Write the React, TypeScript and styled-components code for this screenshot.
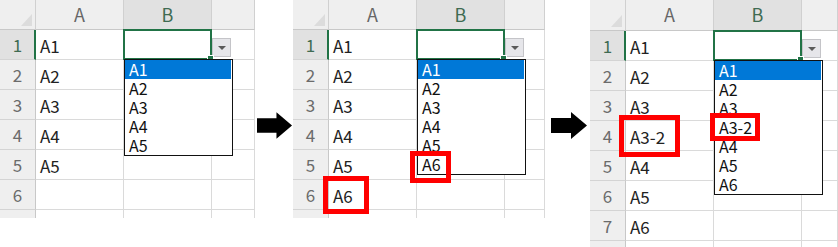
import React from 'react';
import styled, { createGlobalStyle } from 'styled-components';

const GREEN = '#217346';
const GRID = '#dadada';
const FONT = '"Noto Sans CJK JP", "Noto Sans", sans-serif';

const Global = createGlobalStyle`
  html, body { margin: 0; padding: 0; background: #ffffff; }
  body {
    width: 838px;
    height: 247px;
    overflow: hidden;
    font-family: ${FONT};
  }
`;

const Page = styled.div`
  display: flex;
  align-items: flex-start;
  width: 838px;
  height: 247px;
`;

const Sheet = styled.div<{ $cols: string; $rows: string }>`
  flex: none;
  display: grid;
  grid-template-columns: ${(p) => p.$cols};
  grid-template-rows: ${(p) => p.$rows};
`;

const Corner = styled.div`
  position: relative;
  background: #efefef;
  border-bottom: 1px solid #c8c8c8;
  border-right: 1px solid #d0d0d0;
  &::after {
    content: '';
    position: absolute;
    right: 3px;
    bottom: 3px;
    width: 11px;
    height: 12px;
    background: #dcdcdc;
    clip-path: polygon(100% 0, 100% 100%, 0 100%);
  }
`;

const ColHead = styled.div<{ $selected?: boolean }>`
  background: ${(p) => (p.$selected ? '#e1e1e1' : '#efefef')};
  border-right: 1px solid #d0d0d0;
  border-bottom: 1px solid #c8c8c8;
  color: ${(p) => (p.$selected ? '#3f6b52' : '#666666')};
  font-size: 18px;
  line-height: 29px;
  text-align: center;
`;

const RowHead = styled.div<{ $selected?: boolean }>`
  background: ${(p) => (p.$selected ? '#e1e1e1' : '#efefef')};
  border-bottom: 1px solid #d4d4d4;
  border-right: ${(p) => (p.$selected ? `2px solid ${GREEN}` : '1px solid #c8c8c8')};
  color: ${(p) => (p.$selected ? '#3f6b52' : '#6b6b6b')};
  font-size: 17px;
  line-height: 29px;
  text-align: center;
  padding-left: ${(p) => (p.$selected ? '1px' : '0')};
`;

const TailHead = styled.div`
  background: #efefef;
  border-right: 1px solid #c8c8c8;
`;

const Cell = styled.div`
  position: relative;
  border-right: 1px solid ${GRID};
  border-bottom: 1px solid ${GRID};
  color: #222222;
  font-size: 17px;
  line-height: 29px;
  padding: 1px 0 0 4px;
  white-space: nowrap;
`;

const TailCell = styled.div`
  border-right: 1px solid ${GRID};
`;

const ActiveCell = styled(Cell)`
  z-index: 3;
  &::before {
    content: '';
    position: absolute;
    left: -1px;
    top: -1px;
    right: -1px;
    bottom: -1px;
    border: 2px solid ${GREEN};
  }
  &::after {
    content: '';
    position: absolute;
    right: -3px;
    bottom: -3px;
    width: 5px;
    height: 5px;
    background: ${GREEN};
    border: 1px solid #fff;
    z-index: 2;
  }
`;

const DropButton = styled.div`
  position: absolute;
  left: calc(100% + 1px);
  top: 8px;
  width: 19px;
  height: 19px;
  background: #e6e6ea;
  border: 1px solid #c4c4c8;
  box-sizing: border-box;
  &::after {
    content: '';
    position: absolute;
    left: 5px;
    top: 7px;
    border-left: 4px solid transparent;
    border-right: 4px solid transparent;
    border-top: 4px solid #5a5a5a;
  }
`;

const List = styled.div`
  position: absolute;
  left: 0;
  top: 100%;
  width: 109px;
  box-sizing: border-box;
  background: #ffffff;
  border: 1px solid #111111;
  z-index: 4;
`;

const Item = styled.div<{ $active?: boolean }>`
  position: relative;
  height: 19px;
  line-height: 19px;
  font-size: 16px;
  padding-left: 4px;
  margin-right: 1px;
  color: ${(p) => (p.$active ? '#ffffff' : '#111111')};
  background: ${(p) => (p.$active ? '#0078d7' : 'transparent')};
  white-space: nowrap;
`;

const Mark = styled.span<{ $l: number; $t: number; $w: number; $h: number }>`
  position: absolute;
  left: ${(p) => p.$l}px;
  top: ${(p) => p.$t}px;
  width: ${(p) => p.$w}px;
  height: ${(p) => p.$h}px;
  box-sizing: border-box;
  border: 5px solid #ff0000;
  z-index: 5;
  pointer-events: none;
`;

const ArrowSlot = styled.div<{ $w: number; $pad: number }>`
  flex: none;
  width: ${(p) => p.$w}px;
  padding-left: ${(p) => p.$pad}px;
  box-sizing: border-box;
  margin-top: 112px;
  display: flex;
`;

type MarkBox = { row: number; l: number; t: number; w: number; h: number };

type SheetProps = {
  head: number;
  tail: number;
  lastCol: number;
  values: string[];
  items: string[];
  cellMark?: MarkBox;
  itemMark?: MarkBox;
};

const Arrow = () => (
  <svg width="37" height="27" viewBox="0 0 37 27">
    <polygon points="0,6 20,6 20,0 36,13.5 20,27 20,21 0,21" fill="#000" />
  </svg>
);

const Spreadsheet: React.FC<SheetProps> = ({ head, tail, lastCol, values, items, cellMark, itemMark }) => {
  const rows = `${head}px repeat(${values.length}, 30px) ${tail}px`;
  return (
    <Sheet $cols={`36px 88px 88px ${lastCol}px`} $rows={rows}>
      <Corner />
      <ColHead>A</ColHead>
      <ColHead $selected>B</ColHead>
      <ColHead />
      {values.map((v, i) => (
        <React.Fragment key={i}>
          <RowHead $selected={i === 0}>{i + 1}</RowHead>
          <Cell>
            {v}
            {cellMark && cellMark.row === i && (
              <Mark $l={cellMark.l} $t={cellMark.t} $w={cellMark.w} $h={cellMark.h} />
            )}
          </Cell>
          {i === 0 ? (
            <ActiveCell>
              <DropButton />
              <List>
                {items.map((it, j) => (
                  <Item key={j} $active={j === 0}>
                    {it}
                    {itemMark && itemMark.row === j && (
                      <Mark $l={itemMark.l} $t={itemMark.t} $w={itemMark.w} $h={itemMark.h} />
                    )}
                  </Item>
                ))}
              </List>
            </ActiveCell>
          ) : (
            <Cell />
          )}
          <Cell />
        </React.Fragment>
      ))}
      <TailHead />
      <TailCell />
      <TailCell />
      <TailCell />
    </Sheet>
  );
};

export default function App() {
  return (
    <>
      <Global />
      <Page>
        <Spreadsheet
          head={30}
          tail={8}
          lastCol={43}
          values={['A1', 'A2', 'A3', 'A4', 'A5', '']}
          items={['A1', 'A2', 'A3', 'A4', 'A5']}
        />
        <ArrowSlot $w={38} $pad={2}>
          <Arrow />
        </ArrowSlot>
        <Spreadsheet
          head={30}
          tail={8}
          lastCol={40}
          values={['A1', 'A2', 'A3', 'A4', 'A5', 'A6']}
          items={['A1', 'A2', 'A3', 'A4', 'A5', 'A6']}
          cellMark={{ row: 5, l: -6, t: -4, w: 46, h: 38 }}
          itemMark={{ row: 5, l: -8, t: -4, w: 41, h: 32 }}
        />
        <ArrowSlot $w={45} $pad={6}>
          <Arrow />
        </ArrowSlot>
        <Spreadsheet
          head={31}
          tail={8}
          lastCol={36}
          values={['A1', 'A2', 'A3', 'A3-2', 'A4', 'A5', 'A6']}
          items={['A1', 'A2', 'A3', 'A3-2', 'A4', 'A5', 'A6']}
          cellMark={{ row: 3, l: -7, t: -6, w: 61, h: 42 }}
          itemMark={{ row: 3, l: -5, t: -5, w: 50, h: 28 }}
        />
      </Page>
    </>
  );
}
